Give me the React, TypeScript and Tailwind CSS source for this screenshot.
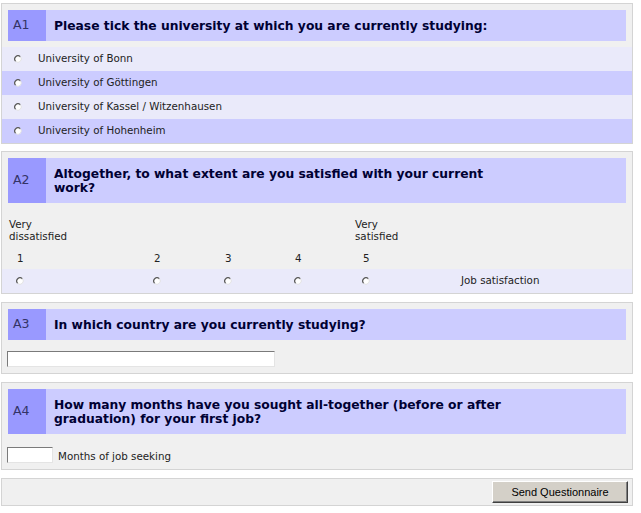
import React from "react";

const universities = [
  "University of Bonn",
  "University of Göttingen",
  "University of Kassel / Witzenhausen",
  "University of Hohenheim",
];

function Radio() {
  return (
    <svg width="8" height="8" viewBox="0 0 8 8" className="block">
      <circle cx="4" cy="4" r="3.2" fill="#ffffff" />
      <path d="M6.3 1.7 A3.2 3.2 0 0 0 1.7 6.3" fill="none" stroke="#5e5e5e" strokeWidth="1.3" />
      <path d="M1.7 6.3 A3.2 3.2 0 0 0 6.3 1.7" fill="none" stroke="#e2e2e2" strokeWidth="1" />
    </svg>
  );
}

function Header({ label, children }: { label: string; children: React.ReactNode }) {
  return (
    <div className="mx-[6px] mt-[6px] flex bg-[#ccccff]">
      <div className="flex w-[38px] shrink-0 items-center bg-[#9999ff] pl-[5px] text-[12.5px] text-[#333366]">
        {label}
      </div>
      <div className="flex items-center pb-[8px] pl-[8px] pt-[9px] text-[12.3px] font-bold leading-[14px] text-[#000033]">
        <span className="w-[462px]">{children}</span>
      </div>
    </div>
  );
}

function Panel({ children, className = "" }: { children: React.ReactNode; className?: string }) {
  return (
    <div className={"w-[632px] border border-[#d4d4d4] bg-[#f0f0f0] " + className}>{children}</div>
  );
}

export default function App() {
  return (
    <div
      className="min-h-[513px] bg-white pl-[1px] pt-[3px] text-[10.3px] text-[#222222]"
      style={{ fontFamily: '"DejaVu Sans", Verdana, sans-serif' }}
    >
      <Panel>
        <Header label="A1">Please tick the university at which you are currently studying:</Header>
        <div className="mt-[6px]">
          {universities.map((u, i) => (
            <div
              key={u}
              className={
                "flex h-[24px] items-center " + (i % 2 === 0 ? "bg-[#eaeafa]" : "bg-[#ccccff]")
              }
            >
              <div className="w-[36px] pl-[12px]">
                <Radio />
              </div>
              <span>{u}</span>
            </div>
          ))}
        </div>
      </Panel>

      <Panel className="mt-[7px]">
        <Header label="A2">
          Altogether, to what extent are you satisfied with your current work?
        </Header>
        <div className="grid grid-cols-[7px_137px_71px_70px_68px_106px_1fr] pt-[15px] leading-[12px]">
          <div />
          <div className="col-span-4">
            Very
            <br />
            dissatisfied
          </div>
          <div>
            Very
            <br />
            satisfied
          </div>
          <div />
          <div />
          {["1", "2", "3", "4", "5"].map((n) => (
            <div key={n} className="pl-[8px] pt-[10px]">
              {n}
            </div>
          ))}
          <div />
        </div>
        <div className="mt-[5px] grid h-[24px] grid-cols-[7px_137px_71px_70px_68px_106px_1fr] items-center bg-[#eaeafa]">
          <div />
          {[0, 1, 2, 3, 4].map((n) => (
            <div key={n} className="pl-[7px]">
              <Radio />
            </div>
          ))}
          <div>Job satisfaction</div>
        </div>
      </Panel>

      <Panel className="mt-[8px]">
        <Header label="A3">In which country are you currently studying?</Header>
        <div className="px-[5px] pb-[6px] pt-[11px]">
          <div className="h-[16px] w-[268px] border border-b-[#e4e4e4] border-l-[#7a7a7a] border-r-[#e4e4e4] border-t-[#7a7a7a] bg-white" />
        </div>
      </Panel>

      <Panel className="mt-[8px]">
        <Header label="A4">
          How many months have you sought all-together (before or after graduation) for your first job?
        </Header>
        <div className="flex items-center gap-[5px] px-[5px] pb-[5px] pt-[11px]">
          <div className="h-[16px] w-[46px] border border-b-[#e4e4e4] border-l-[#7a7a7a] border-r-[#e4e4e4] border-t-[#7a7a7a] bg-white" />
          <span className="pt-[4px]">Months of job seeking</span>
        </div>
      </Panel>

      <Panel className="mt-[8px]">
        <div className="flex justify-end px-[4px] py-[2px]">
          <button
            className="h-[22px] w-[136px] border border-b-[#404040] border-l-white border-r-[#404040] border-t-white bg-[#d4d0c8] text-[11px] text-black shadow-[inset_-1px_-1px_0_#808080]"
            style={{ fontFamily: '"Liberation Sans", Arial, sans-serif' }}
          >
            Send Questionnaire
          </button>
        </div>
      </Panel>
    </div>
  );
}
